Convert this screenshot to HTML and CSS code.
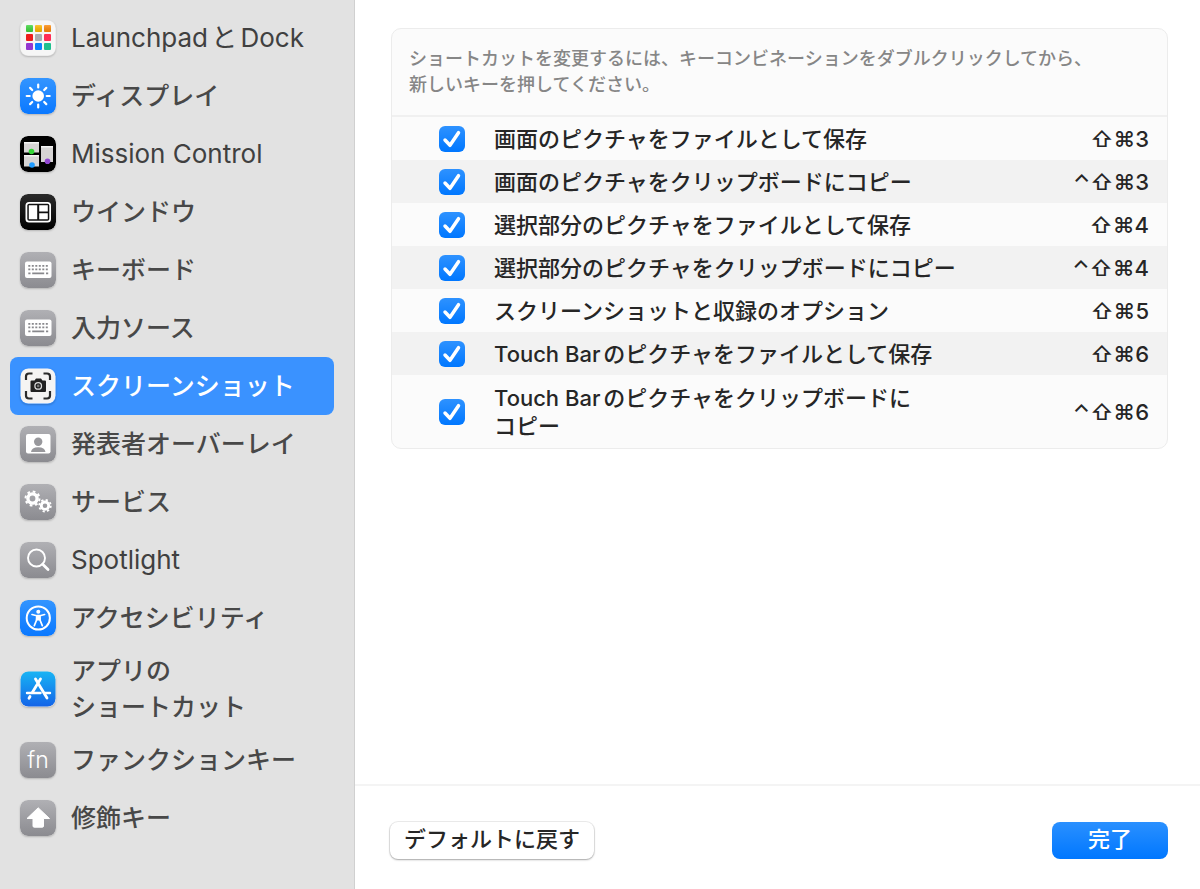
FILE: index.html
```html
<!DOCTYPE html>
<html lang="ja">
<head>
    <meta charset="UTF-8">
    <meta name="viewport" content="width=device-width, initial-scale=1.0">
    <title>キーボードショートカット</title>
    <link rel="stylesheet" href="styles.css">
</head>
<body>
    <svg class="defs" width="0" height="0" aria-hidden="true">
        <defs>
            <linearGradient id="gray" x2="0" y2="1">
                <stop offset="0" stop-color="#b0b0b4"/>
                <stop offset="1" stop-color="#8b8b90"/>
            </linearGradient>
            <linearGradient id="blue" x2="0" y2="1">
                <stop offset="0" stop-color="#3395ff"/>
                <stop offset="1" stop-color="#0a78ff"/>
            </linearGradient>
            <linearGradient id="store" x2="0" y2="1">
                <stop offset="0" stop-color="#18b4f4"/>
                <stop offset="1" stop-color="#1464e8"/>
            </linearGradient>
            <linearGradient id="black" x2="0" y2="1">
                <stop offset="0" stop-color="#2a2a2a"/>
                <stop offset="1" stop-color="#000"/>
            </linearGradient>
            <linearGradient id="shade" x2="0" y2="1">
                <stop offset="0" stop-color="#fff" stop-opacity="0.2"/>
                <stop offset="1" stop-color="#000" stop-opacity="0.1"/>
            </linearGradient>
            <symbol id="keyboard" viewBox="0 0 36 36">
                <rect width="36" height="36" rx="8" fill="url(#gray)"/>
                <rect x="5" y="9.500" width="26.500" height="16.500" rx="2" fill="#fff"/>
                <path d="M8.300 13.800h20M8.300 17.300h20" stroke="#88888c" stroke-width="1.800" stroke-dasharray="2 1.500"/>
                <path d="M8.300 21.300h2.200M12.200 21.300h12M26 21.300h2.200" stroke="#88888c" stroke-width="1.800"/>
            </symbol>
            <symbol id="check" viewBox="0 0 26 26">
                <path d="M6 14l5 5.300L19.500 6.700" fill="none" stroke="#fff" stroke-width="3.500" stroke-linecap="round" stroke-linejoin="round"/>
            </symbol>
        </defs>
    </svg>

    <div class="window">
        <nav class="sidebar">
            <ul class="menu">
                <li><a href="#" class="item latin">
                    <svg class="icon" viewBox="0 0 36 36">
                        <rect x="0.500" y="0.500" width="35" height="35" rx="8" fill="#f6f6f6"/>
                        <rect x="6" y="5" width="7" height="7" rx="1" fill="#3fd83f"/>
                        <rect x="15" y="5" width="7" height="7" rx="1" fill="#ffb900"/>
                        <rect x="24" y="5" width="7" height="7" rx="1" fill="#ff8a0a"/>
                        <rect x="6" y="14" width="7" height="7" rx="1" fill="#ee1c1c"/>
                        <rect x="15" y="14" width="7" height="7" rx="1" fill="#a9adb0"/>
                        <rect x="24" y="14" width="7" height="7" rx="1" fill="#ff2d55"/>
                        <rect x="6" y="23" width="7" height="7" rx="1" fill="#9437d0"/>
                        <rect x="15" y="23" width="7" height="7" rx="1" fill="#0a84ff"/>
                        <rect x="24" y="23" width="7" height="7" rx="1" fill="#1fc08e"/>
                        <path d="M6 5h7v7H6zM15 5h7v7h-7zM24 5h7v7h-7z" fill="url(#shade)"/>
                    </svg>
                    <span>LaunchpadとDock</span>
                </a></li>
                <li><a href="#" class="item">
                    <svg class="icon" viewBox="0 0 36 36">
                        <rect width="36" height="36" rx="8" fill="url(#blue)"/>
                        <circle cx="18.200" cy="18" r="5.800" fill="#fff"/>
                        <path d="M18.200 6.500v3M18.200 26.500v3M6.700 18h3M26.700 18h3M10.100 9.900l2.100 2.100M24.200 24l2.100 2.100M26.300 9.900L24.200 12M12.200 24l-2.100 2.100" stroke="#fff" stroke-width="2.200" stroke-linecap="round"/>
                    </svg>
                    <span>ディスプレイ</span>
                </a></li>
                <li><a href="#" class="item latin">
                    <svg class="icon" viewBox="0 0 36 36">
                        <rect width="36" height="36" rx="8" fill="#000"/>
                        <path d="M4 6h15v10.500H4zM4 19h15v11.500H4zM21 10h12v16H21z" fill="#d6d4d4"/>
                        <path d="M4 6h15v1.500H4zM4 19h15v1.500H4zM21 10h12v1.500H21z" fill="#f4f4f4"/>
                        <circle cx="11.500" cy="15.500" r="2.800" fill="#34d536"/>
                        <circle cx="12" cy="29" r="2.800" fill="#1e9bff"/>
                        <circle cx="27.500" cy="25.200" r="2.800" fill="#9147d2"/>
                    </svg>
                    <span>Mission Control</span>
                </a></li>
                <li><a href="#" class="item">
                    <svg class="icon" viewBox="0 0 36 36">
                        <rect width="36" height="36" rx="8" fill="url(#black)"/>
                        <rect x="5.500" y="8" width="25.500" height="20.500" rx="3.500" fill="#fff"/>
                        <rect x="7.300" y="9.800" width="22" height="17" rx="1.800" fill="#111"/>
                        <path d="M8.800 11.300h8.400v14H8.800zM19.200 11.300h8.600v6.100h-8.600zM19.200 19.300h8.600v6h-8.600z" fill="#fff"/>
                    </svg>
                    <span>ウインドウ</span>
                </a></li>
                <li><a href="#" class="item">
                    <svg class="icon"><use href="#keyboard"/></svg>
                    <span>キーボード</span>
                </a></li>
                <li><a href="#" class="item">
                    <svg class="icon"><use href="#keyboard"/></svg>
                    <span>入力ソース</span>
                </a></li>
                <li><a href="#" class="item selected" aria-current="page">
                    <svg class="icon" viewBox="0 0 36 36">
                        <rect x="0.500" y="0.500" width="35" height="35" rx="8" fill="#f5f4f3"/>
                        <path d="M6 12V8.500Q6 5.500 9 5.500h3.500M23.500 5.500H27q3 0 3 3V12M30 23v4.500q0 3-3 3h-3.500M12.500 30.500H9q-3 0-3-3V23" fill="none" stroke="#2b2b2b" stroke-width="2.200"/>
                        <path d="M10.500 13.500q0-1 1-1h3l1.500-2h5l1.500 2h2.500q1 0 1 1v9.500q0 1-1 1h-13.500q-1 0-1-1z" fill="#222"/>
                        <circle cx="18.200" cy="17.900" r="3.300" fill="#222" stroke="#ddd" stroke-width="1.300"/>
                        <circle cx="18.200" cy="17.900" r="1.300" fill="#777"/>
                    </svg>
                    <span>スクリーンショット</span>
                </a></li>
                <li><a href="#" class="item">
                    <svg class="icon" viewBox="0 0 36 36">
                        <rect width="36" height="36" rx="8" fill="url(#gray)"/>
                        <rect x="6" y="8" width="24.500" height="19.500" rx="2" fill="#fff"/>
                        <circle cx="18.200" cy="15.700" r="4.200" fill="#98989c"/>
                        <path d="M11 26q.5-4.800 7.200-4.800T25.500 26z" fill="#98989c"/>
                    </svg>
                    <span>発表者オーバーレイ</span>
                </a></li>
                <li><a href="#" class="item">
                    <svg class="icon" viewBox="0 0 36 36">
                        <rect width="36" height="36" rx="8" fill="url(#gray)"/>
                        <g fill="none" stroke="#fff">
                            <circle cx="12.500" cy="14.500" r="4.600" stroke-width="3.400"/>
                            <circle cx="12.500" cy="14.500" r="7" stroke-width="2" stroke-dasharray="2.700 2.798"/>
                            <circle cx="25" cy="21.700" r="3.700" stroke-width="2.800"/>
                            <circle cx="25" cy="21.700" r="5.800" stroke-width="1.800" stroke-dasharray="2.200 2.355"/>
                        </g>
                    </svg>
                    <span>サービス</span>
                </a></li>
                <li><a href="#" class="item latin">
                    <svg class="icon" viewBox="0 0 36 36">
                        <rect width="36" height="36" rx="8" fill="url(#gray)"/>
                        <circle cx="16.500" cy="16" r="8.500" fill="none" stroke="#fff" stroke-width="1.900"/>
                        <path d="M22.700 22.200l5.300 5.200" stroke="#fff" stroke-width="2.800" stroke-linecap="round"/>
                    </svg>
                    <span>Spotlight</span>
                </a></li>
                <li><a href="#" class="item">
                    <svg class="icon" viewBox="0 0 36 36">
                        <rect width="36" height="36" rx="8" fill="url(#blue)"/>
                        <circle cx="18.300" cy="18" r="11.600" fill="none" stroke="#fff" stroke-width="2"/>
                        <circle cx="18.300" cy="11.700" r="2" fill="#fff"/>
                        <path d="M12 14.500l4.700 1.200h3.200l4.700-1.200M16.800 16l-.2 4-2.300 5.600M19.800 16l.2 4 2.300 5.600" fill="none" stroke="#fff" stroke-width="1.700" stroke-linecap="round" stroke-linejoin="round"/>
                        <path d="M16 15.500h4.600l.2 5h-5z" fill="#fff"/>
                    </svg>
                    <span>アクセシビリティ</span>
                </a></li>
                <li><a href="#" class="item">
                    <svg class="icon" viewBox="0 0 36 36">
                        <rect x="0.500" y="0.500" width="35" height="35" rx="8" fill="url(#store)"/>
                        <path d="M15.500 8l11.500 19M20.500 8l-8.200 13.500M10 25.500l-1 1.800" stroke="#fff" stroke-width="2.800" stroke-linecap="round"/>
                        <path d="M7 22h13.500M25 22h5" stroke="#fff" stroke-width="2.400" stroke-linecap="round"/>
                    </svg>
                    <span>アプリの<br>ショートカット</span>
                </a></li>
                <li><a href="#" class="item">
                    <span class="icon fn">fn</span>
                    <span>ファンクションキー</span>
                </a></li>
                <li><a href="#" class="item">
                    <svg class="icon" viewBox="0 0 36 36">
                        <rect width="36" height="36" rx="8" fill="url(#gray)"/>
                        <path d="M18.200 7.800L29.500 18.500h-6v7.500q0 1.200-1.200 1.200h-8.100q-1.200 0-1.200-1.200v-7.500h-6z" fill="#fff" stroke="#fff" stroke-linejoin="round"/>
                    </svg>
                    <span>修飾キー</span>
                </a></li>
            </ul>
        </nav>

        <main class="content">
            <section class="card">
                <p class="hint">ショートカットを変更するには、キーコンビネーションをダブルクリックしてから、<br>新しいキーを押してください。</p>
                <table class="shortcuts">
                    <tr>
                        <td class="tick"><span class="checkbox"><input type="checkbox" id="s1" checked><svg><use href="#check"/></svg></span></td>
                        <td><label for="s1">画面のピクチャをファイルとして保存</label></td>
                        <td class="keys">⇧⌘3</td>
                    </tr>
                    <tr>
                        <td class="tick"><span class="checkbox"><input type="checkbox" id="s2" checked><svg><use href="#check"/></svg></span></td>
                        <td><label for="s2">画面のピクチャをクリップボードにコピー</label></td>
                        <td class="keys">⌃⇧⌘3</td>
                    </tr>
                    <tr>
                        <td class="tick"><span class="checkbox"><input type="checkbox" id="s3" checked><svg><use href="#check"/></svg></span></td>
                        <td><label for="s3">選択部分のピクチャをファイルとして保存</label></td>
                        <td class="keys">⇧⌘4</td>
                    </tr>
                    <tr>
                        <td class="tick"><span class="checkbox"><input type="checkbox" id="s4" checked><svg><use href="#check"/></svg></span></td>
                        <td><label for="s4">選択部分のピクチャをクリップボードにコピー</label></td>
                        <td class="keys">⌃⇧⌘4</td>
                    </tr>
                    <tr>
                        <td class="tick"><span class="checkbox"><input type="checkbox" id="s5" checked><svg><use href="#check"/></svg></span></td>
                        <td><label for="s5">スクリーンショットと収録のオプション</label></td>
                        <td class="keys">⇧⌘5</td>
                    </tr>
                    <tr>
                        <td class="tick"><span class="checkbox"><input type="checkbox" id="s6" checked><svg><use href="#check"/></svg></span></td>
                        <td><label for="s6">Touch Barのピクチャをファイルとして保存</label></td>
                        <td class="keys">⇧⌘6</td>
                    </tr>
                    <tr>
                        <td class="tick"><span class="checkbox"><input type="checkbox" id="s7" checked><svg><use href="#check"/></svg></span></td>
                        <td><label for="s7">Touch Barのピクチャをクリップボードに<br>コピー</label></td>
                        <td class="keys">⌃⇧⌘6</td>
                    </tr>
                </table>
            </section>

            <footer class="footer">
                <button type="button" class="btn">デフォルトに戻す</button>
                <button type="button" class="btn btn-primary">完了</button>
            </footer>
        </main>
    </div>
</body>
</html>
```
FILE: styles.css
```css
* {
    box-sizing: border-box;
}
body {
    margin: 0;
    font-family: Inter, "Noto Sans CJK JP", sans-serif;
    font-weight: 500;
    color: #262626;
    background-color: #fff;
    text-autospace: normal;
}
.defs {
    position: absolute;
}
.window {
    display: flex;
    min-height: 100vh;
}
.sidebar {
    flex: none;
    width: 355px;
    padding: 9px 20px 9px 10px;
    background-color: #e2e2e2;
    border-right: 1px solid #d0d0d0;
}
.menu {
    list-style: none;
    margin: 0;
    padding: 0;
}
.item {
    display: flex;
    align-items: center;
    gap: 15px;
    min-height: 58px;
    padding: 6px 10px;
    border-radius: 8px;
    color: #484848;
    font-size: 25px;
    line-height: 36px;
    text-decoration: none;
}
.latin {
    font-size: 26px;
    font-weight: 400;
    color: #404040;
}
.selected {
    background-color: #3a92ff;
    color: #fff;
}
.icon {
    flex: none;
    width: 36px;
    height: 36px;
    border-radius: 8px;
    box-shadow: 0 1px 2px rgba(0,0,0,0.2);
}
.fn {
    background: linear-gradient(#b0b0b4, #8b8b90);
    color: #fff;
    font-size: 23px;
    font-weight: 300;
    text-align: center;
}
.content {
    flex: 1;
    display: flex;
    flex-direction: column;
    justify-content: space-between;
}
.card {
    margin: 28px 32px 28px 36px;
    background-color: #fbfbfb;
    border: 1px solid #ececec;
    border-radius: 10px;
    overflow: hidden;
}
.hint {
    margin: 0;
    padding: 17px;
    border-bottom: 2px solid #f0f0f0;
    color: #868686;
    font-size: 18px;
    line-height: 26px;
}
.shortcuts {
    width: 100%;
    border-collapse: collapse;
    font-size: 22px;
    line-height: 28px;
}
.shortcuts tr {
    height: 43px;
}
.shortcuts tr:nth-child(even) {
    background-color: #f2f2f2;
}
.shortcuts tr:last-child {
    height: 73px;
}
.shortcuts td {
    padding: 0;
}
.shortcuts .tick {
    width: 102px;
    padding-left: 47px;
}
.shortcuts .keys {
    padding-right: 18px;
    text-align: right;
    white-space: nowrap;
}
.checkbox {
    display: grid;
    width: 26px;
    height: 26px;
}
.checkbox input {
    grid-area: 1 / 1;
    appearance: none;
    width: 26px;
    height: 26px;
    margin: 0;
    border-radius: 6px;
    background: #fff;
    border: 1px solid #ccc;
}
.checkbox input:checked {
    background: linear-gradient(#2e92ff, #0077ff);
    border: 0;
}
.checkbox svg {
    grid-area: 1 / 1;
    width: 26px;
    height: 26px;
    pointer-events: none;
}
.footer {
    display: flex;
    justify-content: space-between;
    align-items: center;
    padding: 36px 32px 30px 35px;
    border-top: 2px solid #f4f4f4;
}
.btn {
    height: 37px;
    padding: 0 14px 3px;
    border: 0;
    border-radius: 8px;
    background-color: #fff;
    box-shadow: 0 0 0 1px rgba(0,0,0,0.07), 0 1px 2px rgba(0,0,0,0.3);
    color: #262626;
    font-family: inherit;
    font-size: 22px;
    font-weight: 500;
    line-height: 34px;
}
.btn-primary {
    min-width: 116px;
    background: linear-gradient(#2a90ff, #0077ff);
    box-shadow: none;
    color: #fff;
}
```
